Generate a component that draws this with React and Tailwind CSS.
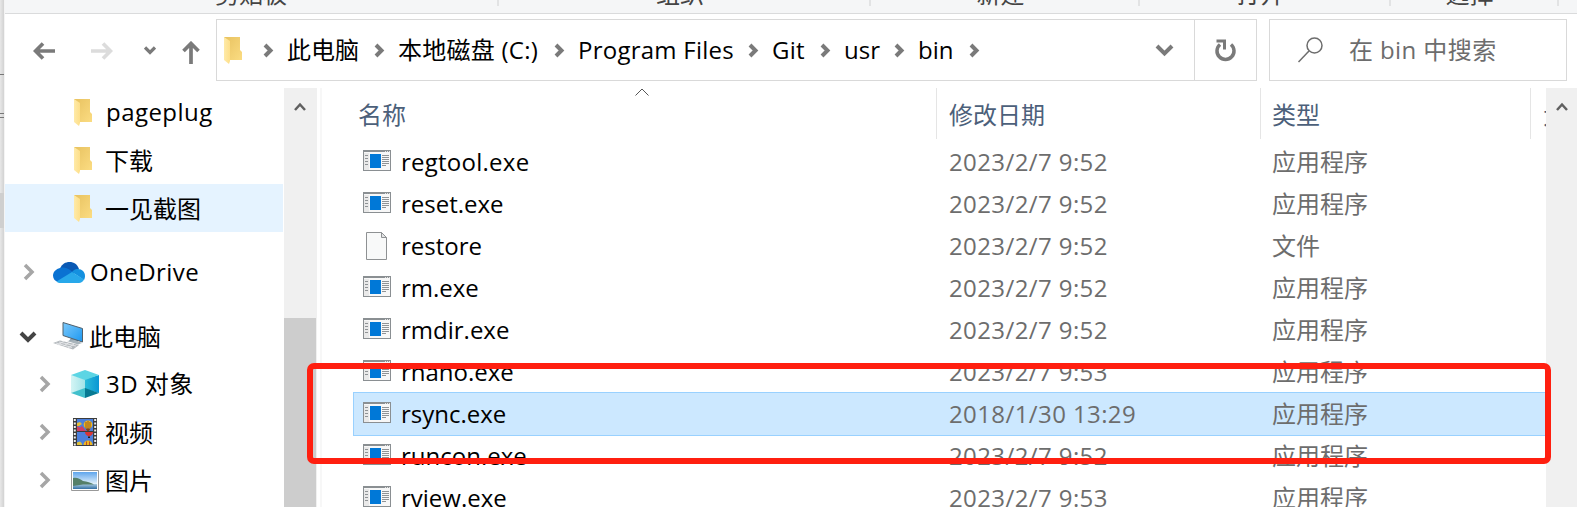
import React from "react";

const files = [
  ["regtool.exe", "2023/2/7 9:52", "应用程序"],
  ["reset.exe", "2023/2/7 9:52", "应用程序"],
  ["restore", "2023/2/7 9:52", "文件"],
  ["rm.exe", "2023/2/7 9:52", "应用程序"],
  ["rmdir.exe", "2023/2/7 9:52", "应用程序"],
  ["rnano.exe", "2023/2/7 9:53", "应用程序"],
  ["rsync.exe", "2018/1/30 13:29", "应用程序"],
  ["runcon.exe", "2023/2/7 9:52", "应用程序"],
  ["rview.exe", "2023/2/7 9:53", "应用程序"],
];

const Chevron = ({ className, d = "M2 2l7 7-7 7", box = "0 0 12 18", w = 4 }) => (
  <svg className={className} viewBox={box} fill="none" stroke="currentColor" strokeWidth={w}>
    <path d={d} />
  </svg>
);

const Folder = () => (
  <svg className="h-[27px] w-[19px] shrink-0" viewBox="0 0 19 27">
    <defs>
      <linearGradient id="fb" x1="0" x2="1" y1="0" y2="1">
        <stop offset="0" stopColor="#e8c260" />
        <stop offset="1" stopColor="#fbdc82" />
      </linearGradient>
      <linearGradient id="ff" x1="0" x2="1">
        <stop offset="0" stopColor="#ffeaa8" />
        <stop offset="1" stopColor="#fddf8a" />
      </linearGradient>
    </defs>
    <path d="M0 0h16v13l2 2v8H4z" fill="url(#fb)" />
    <path d="M0 0l6 4v20l-1 3-5-4z" fill="url(#ff)" />
  </svg>
);

const AppIcon = () => (
  <svg className="-mt-[3px] h-[21px] w-[28px]" viewBox="0 0 28 21" shapeRendering="crispEdges">
    <path d="M0 0h28v21H0z" fill="#8a8f92" />
    <path d="M1 2h26v18H1z" fill="#f7f7f7" />
    <path d="M1 3h5v17H1z" fill="#e9e9e9" />
    <path d="M22 1h1v1h-1zM24 1h1v1h-1zM26 1h1v1h-1z" fill="#e4e4e4" />
    <path d="M7 4h11v14H7z" fill="#0078d7" />
    <path d="M2 5h3v1H2zM2 8h3v1H2zM2 11h3v1H2zM2 14h3v1H2zM19 5h7v1h-7zM19 7h7v1h-7zM19 9h7v1h-7zM19 11h7v1h-7zM19 13h7v1h-7zM19 15h4v1h-4z" fill="#8f9396" />
  </svg>
);

const FileIcon = () => (
  <svg className="-mt-px ml-[3px] h-[28px] w-[21px]" viewBox="0 0 21 28">
    <path d="M.5.5h15l5 5v22H.5z" fill="#f8f9f9" stroke="#8e9193" />
    <path d="M15.500.5v5h5z" fill="#e4e5e6" stroke="#8e9193" />
  </svg>
);

const OneDrive = () => (
  <svg className="h-[21px] w-[32px]" viewBox="0 0 32 21">
    <path d="M7 6.500C9 2 12.500 0 16.500 0c4.500 0 8 2.500 9.500 7l-8 6z" fill="#0a59b4" />
    <path d="M7 6c4-1 7 0 10 2l5 4-17 8C2 19 0 17 0 13.500 0 10 3 7 7 6z" fill="#0a72d2" />
    <path d="M19 10c2-2.500 4-3 6-3 4 0 7 3 7 7 0 1.500-.5 3-1 4z" fill="#1490df" />
    <path d="M3.500 19.500L19 10l12 7.500c-1 2-3 3.500-5 3.500H8c-2 0-3.500-.5-4.500-1.500z" fill="#28a8ea" />
  </svg>
);

const Computer = () => (
  <svg className="h-[28px] w-[32px]" viewBox="0 0 32 28">
    <defs>
      <linearGradient id="scr" x1="0" x2="1" y1="0" y2="1">
        <stop offset="0" stopColor="#7cc9fb" />
        <stop offset="1" stopColor="#1c97f0" />
      </linearGradient>
    </defs>
    <path d="M18 16l7 2v3l-9-2z" fill="#90a0aa" />
    <path d="M14 19l8-1 7 3-4 1.500z" fill="#a9b4bb" />
    <path d="M10 .5l19.500 6V20L10 13.500z" fill="url(#scr)" stroke="#51606b" />
    <path d="M0 21l7-2.500 19 4.500-6 4.500z" fill="#b4b9bd" />
    <path d="M3 21l16 4.500M6 20l17 4M5 23l6-4M10 24.500l6-4M15 26l6-4" stroke="#eceef0" strokeWidth=".8" fill="none" />
  </svg>
);

const Cube = () => (
  <svg className="h-[28px] w-[28px]" viewBox="0 0 28 28">
    <defs>
      <linearGradient id="cl" x1="0" x2="1">
        <stop offset="0" stopColor="#d4f5f5" />
        <stop offset="1" stopColor="#a3e3e8" />
      </linearGradient>
      <linearGradient id="cr" x1="0" x2="1">
        <stop offset="0" stopColor="#2bbbd8" />
        <stop offset="1" stopColor="#0a97d4" />
      </linearGradient>
    </defs>
    <path d="M0 5l14 4v10L0 23z" fill="url(#cl)" />
    <path d="M28 5L14 9v10l14 4z" fill="url(#cr)" />
    <path d="M14 0l14 5-14 5L0 5z" fill="#5cd5e4" />
    <path d="M0 23l14-5v10z" fill="#42c0cc" />
    <path d="M28 23l-14-5v10z" fill="#077a93" />
  </svg>
);

const Video = () => (
  <svg className="ml-[2px] h-[28px] w-[24px]" viewBox="0 0 24 28">
    <path d="M0 0h24v28H0z" fill="#3c3c3c" />
    <path d="M4 1h16v12H4zM4 14h16v13H4z" fill="#4b7fdc" />
    <path d="M1.800 1v27M22.200 1v27" stroke="#eee" strokeWidth="2" strokeDasharray="2 1.500" />
    <path d="M4 8l3 1.500L9 8l4 5H4z" fill="#cf3e62" />
    <path d="M4 5l3-1 2 2-3 2H4z" fill="#e6bd35" />
    <ellipse cx="15" cy="6.800" rx="4.300" ry="4.200" fill="#f0b51e" />
    <path d="M15 3v8M13 4v6M17 4v6" stroke="#7a4422" strokeWidth=".8" />
    <path d="M12.500 10.500h5l-1.500 2.500h-2z" fill="#7a4422" />
    <path d="M12 14h8c0 2-1.500 3.500-4 4.500-2.500-1-4-2.500-4-4.500z" fill="#d93535" />
    <path d="M15 18.500h2V20h-2z" fill="#222" />
    <path d="M10.500 27a4.500 4.500 0 019 0z" fill="#f0b51e" />
    <path d="M4 24.500l3-1 2 2V27H4z" fill="#e0c238" />
    <path d="M13.500 23.500V27M16.500 23.500V27" stroke="#a33" strokeWidth=".8" />
  </svg>
);

const Picture = () => (
  <svg className="h-[21px] w-[28px]" viewBox="0 0 28 21">
    <defs>
      <linearGradient id="sky" x1="0" x2="0" y1="0" y2="1">
        <stop offset="0" stopColor="#5fa5ec" />
        <stop offset="1" stopColor="#e4f2fb" />
      </linearGradient>
      <linearGradient id="sea" x1="0" x2="0" y1="0" y2="1">
        <stop offset="0" stopColor="#a9cbdf" />
        <stop offset="1" stopColor="#336fa5" />
      </linearGradient>
    </defs>
    <path d="M.5.5h27v20H.5z" fill="#fff" stroke="#999" />
    <path d="M2 2h24v12H2z" fill="url(#sky)" />
    <path d="M2 14h24v5H2z" fill="url(#sea)" />
    <path d="M2 8c4-1 7 1 10 3 4 .5 8 1.500 11 3.500H12L2 16z" fill="#557f69" />
  </svg>
);

const NavItem = ({ icon, label, indent, arrow, gap, active, wide }) => (
  <div className={`flex h-12 w-[278px] shrink-0 items-center text-black ${gap ? "mt-4" : ""} ${active ? "bg-[#e5f3ff]" : ""}`}>
    <div className={`flex shrink-0 items-center ${indent ? "w-[66px] pl-[34px]" : "w-12 pl-[18px]"}`}>
      {arrow === "right" && <Chevron className="h-[18px] w-[12px] text-[#a6a6a6]" w={3.5} />}
      {arrow === "down" && <Chevron className="-ml-[4px] mt-[2px] h-[12px] w-[18px] text-[#444]" box="0 0 18 12" d="M2 2l7 7 7-7" w={4} />}
    </div>
    <div className={`flex shrink-0 ${indent ? "w-[35px]" : "w-[37px]"} ${arrow ? "" : "pl-[3px]"}`}>{icon}</div>
    <span className={wide ? "tracking-[0.45px]" : "-ml-px mt-px"}>{label}</span>
  </div>
);

const Crumb = ({ children, className }) => (
  <div className={`flex shrink-0 items-center ${className}`}>
    <Chevron className="mr-[13px] h-[15px] w-[11px] shrink-0 text-[#7a7a7a]" box="0 0 11 15" d="M2 2l5.500 5.500L2 13" w={4} />
    <span>{children}</span>
  </div>
);

const Group = ({ children, className }) => (
  <div className={`flex h-[6px] shrink-0 justify-center border-r-2 border-[#e2e3e4] ${className}`}>
    <span className="-mt-[18px] h-6 leading-6">{children}</span>
  </div>
);

export default function App() {
  return (
    <div className="relative flex h-[507px] w-[1577px] overflow-hidden bg-white font-['Open_Sans','Noto_Sans_CJK_SC',sans-serif] text-2xl leading-8 whitespace-nowrap">
      <div className="flex w-[5px] shrink-0 flex-col border-r border-[#f4f4f4] bg-linear-to-r from-[#e8e8e8] to-[#d2d2d2]">
        <div className="mt-[74px] h-px bg-[#777]" />
        <div className="mt-[38px] h-[5px] border-y border-[#777]" />
        <div className="mt-[75px] h-[35px] bg-[#cfcfcf]" />
      </div>
      <div className="flex w-[1572px] flex-col">
        <div className="flex h-[14px] shrink-0 overflow-hidden border-b border-[#dadbdc] bg-[#f5f6f7] text-[#444]">
          <Group className="w-[494px]">剪贴板</Group>
          <Group className="w-[372px] pr-[8px]">组织</Group>
          <Group className="w-[269px] pr-[8px]">新建</Group>
          <Group className="w-[251px] pr-[8px]">打开</Group>
          <Group className="w-[168px] pr-[9px]">选择</Group>
        </div>
        <div className="flex h-[74px] shrink-0 pt-[5px]">
          <div className="flex h-[62px] w-[211px] shrink-0 items-center text-[#7a7a7a]">
            <svg className="ml-7 mt-px h-[18px] w-[22px]" viewBox="0 0 22 18" fill="none" stroke="currentColor" strokeWidth="3.700"><path d="M22 9H3M10 1.500L2.500 9l7.500 7.500" /></svg>
            <svg className="ml-9 mt-px h-[18px] w-[22px] text-[#dcdcdc]" viewBox="0 0 22 18" fill="none" stroke="currentColor" strokeWidth="3.700"><path d="M0 9h19M12 1.500L19.500 9 12 16.500" /></svg>
            <Chevron className="ml-[31px] mt-px h-[9px] w-[12px]" box="0 0 12 9" d="M1 1.500l5 5 5-5" w={3.3} />
            <svg className="ml-[26px] mt-[5px] h-[23px] w-[18px]" viewBox="0 0 18 23" fill="none" stroke="currentColor" strokeWidth="3.700"><path d="M9 23V3M1.500 10L9 2.500l7.500 7.500" /></svg>
          </div>
          <div className="flex h-[62px] w-[1041px] shrink-0 items-center border border-[#d9d9d9] text-black">
            <div className="flex w-[47px] shrink-0 pl-[7px]"><Folder /></div>
            <Crumb className="-ml-px w-[111px]">此电脑</Crumb>
            <Crumb className="w-[180px] tracking-[0.25px]">本地磁盘 (C:)</Crumb>
            <Crumb className="w-[194px] tracking-[0.25px]">Program Files</Crumb>
            <Crumb className="w-[72px] tracking-[0.25px]">Git</Crumb>
            <Crumb className="w-[74px]">usr</Crumb>
            <Crumb className="w-[75px]">bin</Crumb>
            <Crumb className="w-6" />
            <Chevron className="ml-auto mr-[20px] mt-px h-[13px] w-[19px] text-[#7a7a7a]" box="0 0 19 13" d="M2 2l7.500 7.500L17 2" w={4} />
            <div className="flex h-full w-[62px] items-center justify-center border-l border-[#d9d9d9] text-[#7a7a7a]">
              <svg className="h-[23px] w-[21px]" viewBox="0 0 21 23" fill="none" stroke="currentColor" strokeWidth="3.500"><path d="M5 5.500A8.500 8.500 0 1016 5.500" /><path d="M1.500 2h8v8.500" strokeWidth="3" /></svg>
            </div>
          </div>
          <div className="ml-3 flex h-[62px] w-[298px] shrink-0 items-center border border-[#d9d9d9] text-[#6d6d6d]">
            <svg className="ml-7 h-[26px] w-[25px]" viewBox="0 0 25 26" fill="none" stroke="currentColor" strokeWidth="1.500"><circle cx="16.500" cy="8.500" r="7.500" /><path d="M11 14L.5 25" /></svg>
            <span className="ml-[26px] tracking-[0.4px]">在 bin 中搜索</span>
          </div>
        </div>
        <div className="flex h-[419px]">
          <div className="flex w-[279px] shrink-0 flex-col">
            <NavItem indent wide icon={<Folder />} label="pageplug" />
            <NavItem indent icon={<Folder />} label="下载" />
            <NavItem indent icon={<Folder />} label="一见截图" active />
            <NavItem gap wide arrow="right" icon={<OneDrive />} label="OneDrive" />
            <NavItem gap arrow="down" icon={<Computer />} label="此电脑" />
            <NavItem indent wide arrow="right" icon={<Cube />} label="3D 对象" />
            <NavItem indent arrow="right" icon={<Video />} label="视频" />
            <NavItem indent arrow="right" icon={<Picture />} label="图片" />
          </div>
          <div className="flex w-[33px] shrink-0 flex-col items-center bg-[#f0f0f0] pt-[14px] text-[#606060]">
            <Chevron className="-ml-px h-[10px] w-[12px]" box="0 0 12 10" d="M1 8l5-5.500L11 8" w={2.5} />
            <div className="mt-[206px] w-8 flex-1 self-start bg-[#cdcdcd]" />
          </div>
          <div className="ml-[3px] w-[2px] shrink-0 bg-[#f7f7f7]" />
          <div className="flex w-[1224px] shrink-0 flex-col overflow-hidden pl-[31px]">
            <div className="flex h-[51px] shrink-0 text-[#4c607a]">
              <div className="flex w-[584px] shrink-0 border-r border-[#e5e5e5] pl-[5px] pt-[11px]">
                <span className="w-[277px]">名称</span>
                <svg className="-mt-[11px] h-2 w-[14px]" viewBox="0 0 14 8" fill="none" stroke="#555"><path d="M.5 7.500L7 1l6.500 6.500" /></svg>
              </div>
              <div className="w-[324px] shrink-0 border-r border-[#e5e5e5] pl-3 pt-[11px]">修改日期</div>
              <div className="w-[270px] shrink-0 border-r border-[#e5e5e5] pl-[11px] pt-[11px]">类型</div>
              <div className="pl-3 pt-[11px]">大小</div>
            </div>
            <div className="flex flex-col pt-[2px]">
              {files.map(([name, date, type]) => (
                <div key={name} className={`ml-px flex h-[42px] shrink-0 items-center ${name === "rsync.exe" ? "bg-[#cce8ff] outline outline-[#99d1ff]" : ""}`}>
                  <div className="flex w-[47px] shrink-0 pl-[9px]">{name === "restore" ? <FileIcon /> : <AppIcon />}</div>
                  <span className={`w-[548px] shrink-0 text-black ${name === "regtool.exe" ? "tracking-[0.25px]" : ""}`}>{name}</span>
                  <span className="w-[323px] shrink-0 tracking-[0.4px] text-[#6d6d6d]">{date}</span>
                  <span className="text-[#6d6d6d]">{type}</span>
                </div>
              ))}
            </div>
          </div>
          <div className="flex w-[31px] shrink-0 justify-center bg-[#f0f0f0] pt-[14px] text-[#606060]">
            <Chevron className="h-[10px] w-[12px]" box="0 0 12 10" d="M1 8l5-5.500L11 8" w={2.5} />
          </div>
        </div>
      </div>
      <div className="absolute left-[307px] top-[363px] h-[101px] w-[1244px] rounded-[7px] border-[6px] border-[#ff1f10]" />
    </div>
  );
}
